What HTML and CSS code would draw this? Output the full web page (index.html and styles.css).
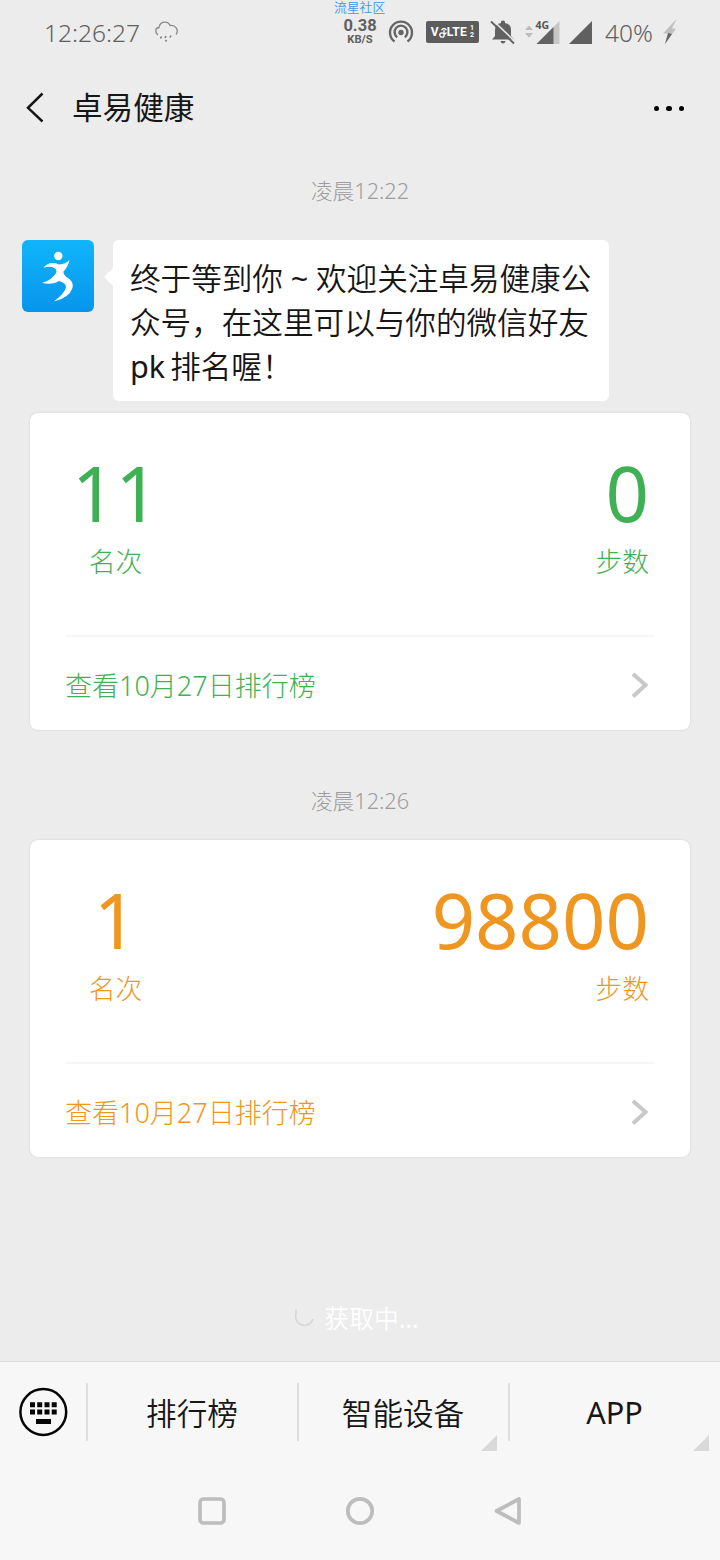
FILE: index.html
```html
<!DOCTYPE html>
<html lang="zh-CN">
<head>
<meta charset="utf-8">
<title>卓易健康</title>
<link rel="stylesheet" href="styles.css">
</head>
<body>
<div class="screen">
  <header class="status">
    <span class="watermark">流星社区</span>
    <span class="clock">12:26:27</span>
    <svg class="weather" width="26" height="24" viewBox="0 0 26 24"><path d="M3.800 15C.5 12 1.500 7.500 5 7.500C6 1 14 .5 16 5.500C21 4.500 25.500 10 22 14.500" fill="none" stroke="#888" stroke-width="1.300"/><path d="M7.500 16.500l-1 2M12 16l-1 2M17 15.500l-1 2M12.500 20l-1 1.500" stroke="#777" stroke-width="1.500"/></svg>
    <span class="speed"><b class="rate">0.38</b><b class="unit">KB/S</b></span>
    <svg class="hotspot" width="26" height="26" viewBox="0 0 26 26"><g fill="none" stroke="#656565" stroke-width="2.400"><path d="M6.500 22.500A11 11 0 1 1 19.500 22.500"/><path d="M9.200 18.200A6.400 6.400 0 1 1 16.800 18.200"/></g><circle cx="13" cy="13.500" r="2.700" fill="#656565"/></svg>
    <span class="volte"><span>V</span><svg width="8" height="13" viewBox="0 0 8 13"><g fill="none" stroke="#fff" stroke-width="1.300"><circle cx="3" cy="9" r="2.200"/><path d="M5 8V4M2.500 4q2.500-3 5 0M5.500 8.500l2-2"/></g></svg><span>LTE</span><span class="sims"><i>1</i><i>2</i></span></span>
    <svg class="bell" width="26" height="26" viewBox="0 0 26 26"><path d="M2 20.500L5 17V11Q5 5 11 4V2.500Q13 .5 15 2.500V4Q21 5 21 11V17L24 20.500Z" fill="#626262"/><path d="M10.500 22h5q-.5 2.500-2.500 2.500t-2.500-2.500" fill="#626262"/><path d="M3 1.500L25 22.500" stroke="#ececec" stroke-width="1.600"/><path d="M1 2.500L24 24.500" stroke="#626262" stroke-width="1.900"/></svg>
    <svg class="signal" width="38" height="26" viewBox="0 0 38 26"><path d="M1 11l4-4.500 4 4.500zM1 14h8l-4 4.500z" fill="#bbb"/><path d="M12.500 25L35.500 2V25Z" fill="#c6c6c6"/><path d="M12.500 25L29.500 8V25Z" fill="#626262"/><text class="net" x="11.500" y="9.500">4G</text></svg>
    <svg class="signal-two" width="25" height="26" viewBox="0 0 25 26"><path d="M1 25L24 2V25Z" fill="#606060"/></svg>
    <span class="battery">40%</span>
    <svg class="bolt" width="16" height="26" viewBox="0 0 16 26"><path d="M14.500 0L1 14.500h5L3 25 14 9.500h-4Z" fill="#c0c0c0"/><path d="M6 14L10 15 3 25l2.500-9z" fill="#666"/></svg>
  </header>

  <nav class="titlebar">
    <svg width="20" height="32" viewBox="0 0 20 32"><path d="M17.500 1.500L3 15.800 17.500 29.500" fill="none" stroke="#161616" stroke-width="2.500"/></svg>
    <h1>卓易健康</h1>
    <span class="more"><i></i><i></i><i></i></span>
  </nav>

  <main class="chat">
    <time class="stamp">凌晨12:22</time>
    <section class="message">
      <svg class="avatar" width="72" height="72" viewBox="0 0 72 72"><defs><linearGradient id="sky" x2="0" y2="1"><stop stop-color="#10b5fb"/><stop offset="1" stop-color="#0795ec"/></linearGradient></defs><rect width="72" height="72" rx="6" fill="url(#sky)"/><circle cx="36.300" cy="16" r="4.200" fill="#fff"/><path d="M21.500 28C25 22.500 31 22 37 24.500Q44 24 47.500 20Q46 27 41.500 31.500Q41 34 44.500 37Q52 41 50.500 48Q47 58 32 61.500Q43 53 44 47Q44 43 37 41Q31 45 20 43Q30 40 34 33Q36 29 30 27Q25 26 21.500 28Z" fill="#fff"/></svg>
      <div class="bubble">
        <p>终于等到你<span class="tilde">~</span>欢迎关注卓易健康公</p>
        <p>众号，在这里可以与你的微信好友</p>
        <p><span class="latin">pk</span>排名喔！</p>
      </div>
    </section>

    <article class="card green">
      <div class="stats">
        <div class="stat rank"><strong>11</strong><span>名次</span></div>
        <div class="stat steps"><strong>0</strong><span>步数</span></div>
      </div>
      <div class="link"><span>查看10月27日排行榜</span><svg width="18" height="26" viewBox="0 0 18 26"><path d="M2 2L14.500 13 2 24.500" fill="none" stroke="#c8c8c8" stroke-width="4"/></svg></div>
    </article>

    <time class="stamp second">凌晨12:26</time>

    <article class="card orange">
      <div class="stats">
        <div class="stat rank"><strong>1</strong><span>名次</span></div>
        <div class="stat steps"><strong>98800</strong><span>步数</span></div>
      </div>
      <div class="link"><span>查看10月27日排行榜</span><svg width="18" height="26" viewBox="0 0 18 26"><path d="M2 2L14.500 13 2 24.500" fill="none" stroke="#c8c8c8" stroke-width="4"/></svg></div>
    </article>

    <div class="loading"><svg width="20" height="18" viewBox="0 0 20 18"><path d="M1 1.500V6A8.800 8.800 0 0 0 18 11" fill="none" stroke="#d5d5d5" stroke-width="1.500"/></svg><span>获取中<span class="dots">...</span></span></div>
  </main>

  <footer class="footer">
    <div class="menu">
      <div class="keyboard"><svg width="50" height="50" viewBox="0 0 50 50"><circle cx="25.300" cy="25" r="22.900" fill="none" stroke="#050505" stroke-width="2.500"/><path d="M12 15.300h5v5h-5zM19.200 15.300h5v5h-5zM26.500 15.300h5v5h-5zM33.700 15.300h5v5h-5zM12 22.500h5v5h-5zM19.200 22.500h5v5h-5zM26.500 22.500h5v5h-5zM33.700 22.500h5v5h-5zM18 32h15v5H18z" fill="#050505"/></svg></div>
      <div class="item">排行榜</div>
      <div class="item sub">智能设备</div>
      <div class="item sub app">APP</div>
    </div>
    <div class="sysnav">
      <svg width="30" height="30" viewBox="0 0 30 30"><rect x="3" y="3" width="24" height="24" rx="3.500"/></svg>
      <svg width="30" height="30" viewBox="0 0 30 30"><circle cx="15" cy="15" r="12.200"/></svg>
      <svg width="30" height="30" viewBox="0 0 30 30"><path d="M3.500 15L26 3V27Z" stroke-linejoin="round"/></svg>
    </div>
  </footer>
</div>
</body>
</html>
```

FILE: styles.css
```css
* { box-sizing: border-box; }
body {
  margin: 0;
  background: #ececec;
  font-family: "Noto Sans", "Noto Sans CJK SC", sans-serif;
  font-weight: 350;
  color: #161616;
}
i { font-style: normal; }
svg { display: block; flex: none; }
.screen { width: 720px; height: 1560px; display: flex; flex-direction: column; overflow: hidden; }

.status { position: relative; height: 64px; display: flex; align-items: center; padding-left: 43px; color: #606060; font-size: 24.5px; font-weight: 300; flex: none; white-space: nowrap; }
.watermark { position: absolute; left: 334px; top: 0; font: 350 12.8px/13px "Noto Sans CJK SC", sans-serif; color: #4398e8; }
.clock { width: 98px; line-height: 32px; padding: 1px 0 0 1px; }
.weather { margin-left: 13px; }
.speed { width: 36px; margin-left: 162px; display: flex; flex-direction: column; align-items: center; font-family: Roboto, sans-serif; margin-top: -1px; }
.rate { font-size: 16.5px; line-height: 16px; font-weight: 700; }
.unit { font-size: 11.2px; line-height: 11px; font-weight: 700; }
.hotspot { margin-left: 10px; }
.volte { margin-left: 12px; width: 53px; height: 22px; border-radius: 2px; background: #5c5c5c; color: #fff; display: flex; align-items: center; justify-content: center; font: 700 12px/22px Roboto, sans-serif; letter-spacing: .3px; }
.sims { display: flex; flex-direction: column; font-size: 7px; line-height: 7px; margin-left: 3px; }
.bell { margin-left: 11px; }
.signal { margin-left: 8px; }
.net { font: 700 10.5px "Noto Sans", sans-serif; fill: #555; }
.signal-two { margin-left: 6px; }
.battery { margin-left: 12px; width: 49px; line-height: 32px; padding-top: 1px; }
.bolt { margin-left: 8px; }

.titlebar { height: 87px; display: flex; align-items: center; padding: 0 36px 0 25px; flex: none; }
.titlebar h1 { margin: -2px 0 0 27px; font-size: 30.6px; line-height: 44px; font-weight: 400; }
.more { margin: 2px 0 0 auto; display: flex; gap: 7px; }
.more i { width: 5.500px; height: 5.500px; border-radius: 50%; background: #000; }

.chat { height: 1210px; flex: none; padding: 0 30px; }
.stamp { display: block; text-align: center; margin-top: 25px; font-size: 21.7px; line-height: 30px; height: 30px; font-weight: 300; color: #9c9c9c; }
.message { margin: 34px 0 0 -8px; display: flex; align-items: flex-start; }
.bubble { position: relative; margin-left: 19px; width: 496px; height: 161px; padding: 16px 0 0 17px; border-radius: 6px; background: #fff; font-size: 30.6px; line-height: 44px; white-space: nowrap; }
.bubble::before { content: ""; position: absolute; left: -9px; top: 27px; border: 10px solid transparent; border-right-color: #fff; border-left: 0; }
.bubble p { margin: 0; }
.tilde { display: inline-block; width: 33px; text-align: center; font-weight: 400; }
.latin { margin-right: 5px; font-weight: 400; }

.card { margin-top: 12px; height: 317px; padding: 0 35px; background: #fff; border-radius: 8px; box-shadow: 0 0 2px #c8c8c8; display: flex; flex-direction: column; }
.green { color: #3fb154; }
.orange { color: #ee961f; }
.stats { height: 224px; display: flex; justify-content: space-between; padding-top: 40px; border-bottom: 2px solid #f6f6f6; }
.stat { display: flex; flex-direction: column; }
.stat strong { font-size: 76px; line-height: 80px; font-weight: 400; }
.stat span { font-size: 26.8px; line-height: 36px; margin-top: 11px; font-weight: 300; }
.rank { width: 101px; align-items: center; }
.steps { align-items: flex-end; padding-right: 6px; }
.link { flex: 1; display: flex; align-items: center; justify-content: space-between; padding: 2px 6px 0 0; font-size: 27px; font-weight: 300; }
.second { margin-top: 56px; }
.second + .card { margin-top: 24px; height: 317px; }
.loading { display: flex; align-items: center; justify-content: center; margin: 142px 0 0 -6px; gap: 9px; height: 36px; color: #fff; font-size: 24.800px; }
.dots { font-weight: 400; }

.footer { flex: 1; background: #f7f7f7; border-top: 1px solid #dcdcdc; }
.menu { height: 101px; display: grid; grid-template-columns: 86px 211px 211px 212px; font-size: 30.6px; }
.keyboard { padding: 25px 0 0 18px; }
.item { position: relative; display: flex; align-items: center; justify-content: center; height: 58px; margin-top: 21px; border-left: 2px solid #dedede; padding: 0 1px 0 0; }
.app { font-weight: 400; }
.sub::after { content: ""; position: absolute; right: 11px; bottom: -10px; border-left: 16px solid transparent; border-bottom: 16px solid #d9d9d9; }
.sysnav { display: flex; justify-content: center; gap: 118px; padding-top: 33px; }
.sysnav svg { fill: none; stroke: #bdbdbd; stroke-width: 3.700; }
```
